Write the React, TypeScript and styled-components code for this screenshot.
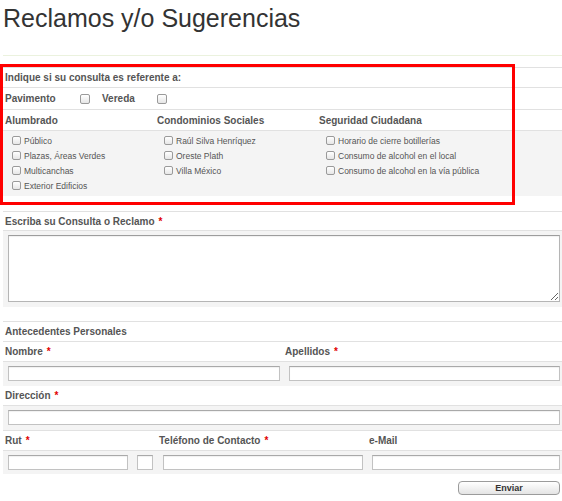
import React from "react";
import styled, { createGlobalStyle } from "styled-components";

/* --- Global --- */

const GlobalStyle = createGlobalStyle`
  html, body {
    margin: 0;
    padding: 0;
    background: #fff;
  }
  body {
    font-family: "Liberation Sans", Arial, sans-serif;
    color: #555;
  }
  * {
    box-sizing: border-box;
  }
`;

/* --- Styled Components --- */

const Page = styled.div`
  width: 562px;
  padding-left: 3px;
  overflow: hidden;
`;

const Title = styled.h1`
  margin: 0;
  padding-top: 3px;
  font-size: 25px;
  line-height: 30px;
  font-weight: 400;
  color: #333;
`;

const Rule = styled.div`
  height: 1px;
  margin: 22px 0 11px;
  background: #ebf2de;
`;

const Group = styled.section<{ $after?: number }>`
  position: relative;
  margin-bottom: ${(p) => p.$after ?? 0}px;
`;

const Highlight = styled.div`
  position: absolute;
  top: -3px;
  left: -3px;
  width: 515px;
  height: 141px;
  border: 3px solid #f00;
  pointer-events: none;
`;

const Row = styled.div<{ $h: number; $cols?: string; $plain?: boolean }>`
  display: grid;
  grid-template-columns: ${(p) => p.$cols ?? "1fr"};
  align-items: center;
  height: ${(p) => p.$h}px;
  border-top: ${(p) => (p.$plain ? "none" : "1px solid #e1e1e1")};
`;

const Label = styled.span`
  padding-left: 2px;
  font-size: 10px;
  font-weight: 700;
  color: #555;
  white-space: nowrap;
`;

const Req = styled.span`
  margin-left: 4px;
  color: #e10000;
  font-size: 10px;
`;

const Shaded = styled.div<{ $cols?: string; $pad?: string }>`
  display: grid;
  grid-template-columns: ${(p) => p.$cols ?? "1fr"};
  align-items: start;
  padding: ${(p) => p.$pad ?? "4px 0 5px"};
  background: #f4f4f4;
  border-top: 1px solid #e1e1e1;
`;

const CheckList = styled.div`
  display: flex;
  flex-direction: column;
  padding-left: 9px;
`;

const Item = styled.label`
  display: flex;
  align-items: center;
  height: 15px;
  font-size: 8.5px;
  color: #555;
  white-space: nowrap;
`;

const Check = styled.input.attrs({ type: "checkbox" })<{ $size?: number }>`
  appearance: none;
  flex: none;
  width: ${(p) => p.$size ?? 9}px;
  height: ${(p) => p.$size ?? 9}px;
  margin: 0 3px 0 0;
  border: 1px solid #9a9a9a;
  border-radius: 2px;
  background: linear-gradient(#fff, #e6e6e6);
`;

const BoxCell = styled.div`
  display: flex;
  align-items: center;
  padding-left: 3px;
`;

const Cell = styled.div<{ $indent?: number }>`
  display: flex;
  gap: 9px;
  padding-left: ${(p) => p.$indent ?? 5}px;
`;

const Field = styled.input<{ $w: number }>`
  width: ${(p) => p.$w}px;
  height: 15px;
  margin: 0;
  padding: 0 2px;
  border: 1px solid #c2c2c2;
  border-top-color: #a9a9a9;
  background: #fff;
  box-shadow: inset 0 1px 1px rgba(0, 0, 0, 0.06);
  font-size: 9px;
  outline: none;
`;

const Area = styled.textarea`
  display: block;
  width: 552px;
  height: 67px;
  margin: 0 0 0 5px;
  border: 1px solid #b5b5b5;
  border-top-color: #9d9d9d;
  background: #fff;
  box-shadow: inset 0 1px 1px rgba(0, 0, 0, 0.06);
  font-family: inherit;
  font-size: 10px;
  outline: none;
`;

const Actions = styled.div`
  display: flex;
  justify-content: flex-end;
  padding: 7px 2px 0 0;
`;

const Submit = styled.button`
  width: 102px;
  height: 14px;
  padding: 0;
  border: 1px solid #9b9b9b;
  border-radius: 4px;
  background: linear-gradient(#fff, #e4e4e4);
  font-family: inherit;
  font-size: 9px;
  font-weight: 700;
  line-height: 12px;
  color: #333;
`;

/* --- Data --- */

const columns = [
  {
    title: "Alumbrado",
    items: ["Público", "Plazas, Áreas Verdes", "Multicanchas", "Exterior Edificios"],
  },
  {
    title: "Condominios Sociales",
    items: ["Raúl Silva Henríquez", "Oreste Plath", "Villa México"],
  },
  {
    title: "Seguridad Ciudadana",
    items: [
      "Horario de cierre botillerías",
      "Consumo de alcohol en el local",
      "Consumo de alcohol en la vía pública",
    ],
  },
];

const TOPIC_COLS = "152px 162px 1fr";

/* --- Component --- */

export default function App() {
  return (
    <>
      <GlobalStyle />
      <Page>
        <Title>Reclamos y/o Sugerencias</Title>
        <Rule />

        <Group $after={15}>
          <Row $h={20}>
            <Label>Indique si su consulta es referente a:</Label>
          </Row>
          <Row $h={22} $cols="74px 22px 55px 22px 1fr">
            <Label>Pavimento</Label>
            <BoxCell>
              <Check $size={10} />
            </BoxCell>
            <Label style={{ paddingLeft: 3 }}>Vereda</Label>
            <BoxCell>
              <Check $size={10} />
            </BoxCell>
          </Row>
          <Row $h={21} $cols={TOPIC_COLS}>
            {columns.map((c) => (
              <Label key={c.title}>{c.title}</Label>
            ))}
          </Row>
          <Shaded $cols={TOPIC_COLS} $pad="2px 0 3px">
            {columns.map((c) => (
              <CheckList key={c.title}>
                {c.items.map((it) => (
                  <Item key={it}>
                    <Check />
                    {it}
                  </Item>
                ))}
              </CheckList>
            ))}
          </Shaded>
          <Highlight />
        </Group>

        <Group $after={14}>
          <Row $h={19}>
            <Label>
              Escriba su Consulta o Reclamo<Req>*</Req>
            </Label>
          </Row>
          <Shaded>
            <Area />
          </Shaded>
        </Group>

        <Group>
          <Row $h={20}>
            <Label>Antecedentes Personales</Label>
          </Row>
          <Row $h={20} $cols="280px 1fr">
            <Label>
              Nombre<Req>*</Req>
            </Label>
            <Label>
              Apellidos<Req>*</Req>
            </Label>
          </Row>
          <Shaded $cols="280px 1fr">
            <Cell>
              <Field $w={272} />
            </Cell>
            <Cell $indent={6}>
              <Field $w={271} />
            </Cell>
          </Shaded>
          <Row $h={19} $plain>
            <Label>
              Dirección<Req>*</Req>
            </Label>
          </Row>
          <Shaded>
            <Cell>
              <Field $w={552} />
            </Cell>
          </Shaded>
          <Row $h={20} $cols="154px 210px 1fr">
            <Label>
              Rut<Req>*</Req>
            </Label>
            <Label>
              Teléfono de Contacto<Req>*</Req>
            </Label>
            <Label>e-Mail</Label>
          </Row>
          <Shaded $cols="154px 210px 1fr" $pad="4px 0 4px">
            <Cell>
              <Field $w={120} />
              <Field $w={16} />
            </Cell>
            <Cell $indent={6}>
              <Field $w={200} />
            </Cell>
            <Cell>
              <Field $w={188} />
            </Cell>
          </Shaded>
        </Group>

        <Actions>
          <Submit type="button">Enviar</Submit>
        </Actions>
      </Page>
    </>
  );
}
